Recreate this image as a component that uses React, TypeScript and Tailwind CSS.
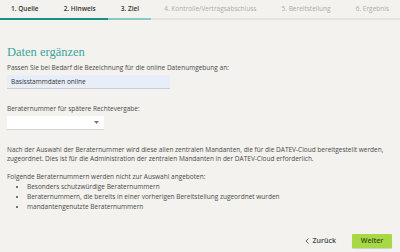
import React from 'react';

const steps = [
  { label: '1. Quelle', done: true },
  { label: '2. Hinweis', done: true },
  { label: '3. Ziel', done: true },
  { label: '4. Kontrolle/Vertragsabschluss', done: false },
  { label: '5. Bereitstellung', done: false },
  { label: '6. Ergebnis', done: false },
];

export default function App() {
  return (
    <div
      className="w-[400px] h-[252px] bg-[#f3f2ee] text-[#4a4a4a] flex flex-col overflow-hidden"
      style={{ fontFamily: '"Open Sans", "Noto Sans", sans-serif' }}
    >
      {/* step bar */}
      <div className="flex justify-between px-[11px] pt-[4px] h-[18px] text-[6.5px] leading-[9px]">
        {steps.map((s) => (
          <span key={s.label} className={s.done ? 'text-[#333] font-semibold' : 'text-[#ababab]'}>
            {s.label}
          </span>
        ))}
      </div>
      <div className="flex h-[2px] bg-[#e4e3df]">
        <div className="w-[108px] bg-[#1c8e88]" />
        <div className="w-[43px] bg-[#86cbc6]" />
      </div>

      <div className="flex-1 flex flex-col px-[7px]">
        <h2
          className="mt-[24px] text-[12.5px] leading-[16px] text-[#3ba59f]"
          style={{ fontFamily: '"Liberation Serif", serif' }}
        >
          Daten ergänzen
        </h2>
        <p className="mt-[3px] text-[6.5px] leading-[9px]">
          Passen Sie bei Bedarf die Bezeichnung für die online Datenumgebung an:
        </p>
        <div className="mt-[3px] w-[163px] h-[14px] bg-[#e8eef9] border-b border-[#c9cdd4] flex items-center px-[4px] text-[6.5px] text-[#333]">
          Basisstammdaten online
        </div>

        <p className="mt-[15px] text-[6.5px] leading-[9px]">Beraternummer für spätere Rechtevergabe:</p>
        <div className="mt-[3px] w-[97px] h-[14px] bg-white border-b border-[#d4d4d4] flex items-center justify-end pr-[5px]">
          <svg width="5" height="3" viewBox="0 0 5 3">
            <path d="M0 0h5L2.5 3z" fill="#777" />
          </svg>
        </div>

        <p className="mt-[15px] text-[6.5px] leading-[9px]">
          Nach der Auswahl der Beraternummer wird diese allen zentralen Mandanten, die für die DATEV-Cloud bereitgestellt werden,
          <br />
          zugeordnet. Dies ist für die Administration der zentralen Mandanten in der DATEV-Cloud erforderlich.
        </p>
        <p className="mt-[9px] text-[6.5px] leading-[10px]">
          Folgende Beraternummern werden nicht zur Auswahl angeboten:
        </p>
        <ul className="text-[6.5px] leading-[10px] pl-[20px] list-disc">
          <li>Besonders schutzwürdige Beraternummern</li>
          <li>Beraternummern, die bereits in einer vorherigen Bereitstellung zugeordnet wurden</li>
          <li>mandantengenutzte Beraternummern</li>
        </ul>

        <div className="mt-auto mb-[4px] flex items-center justify-end gap-[16px] pr-[1px]">
          <div className="flex items-center gap-[4px] text-[7px] font-semibold text-[#444]">
            <svg width="4" height="6" viewBox="0 0 4 6">
              <path d="M3.5 0.5L1 3l2.5 2.5" stroke="#555" strokeWidth="0.9" fill="none" />
            </svg>
            Zurück
          </div>
          <div className="w-[40px] h-[14px] rounded-[1px] bg-[#a6d943] shadow-[0_1px_1px_rgba(0,0,0,0.15)] flex items-center justify-center text-[7px] font-semibold text-[#3f4a1e]">
            Weiter
          </div>
        </div>
      </div>
    </div>
  );
}
